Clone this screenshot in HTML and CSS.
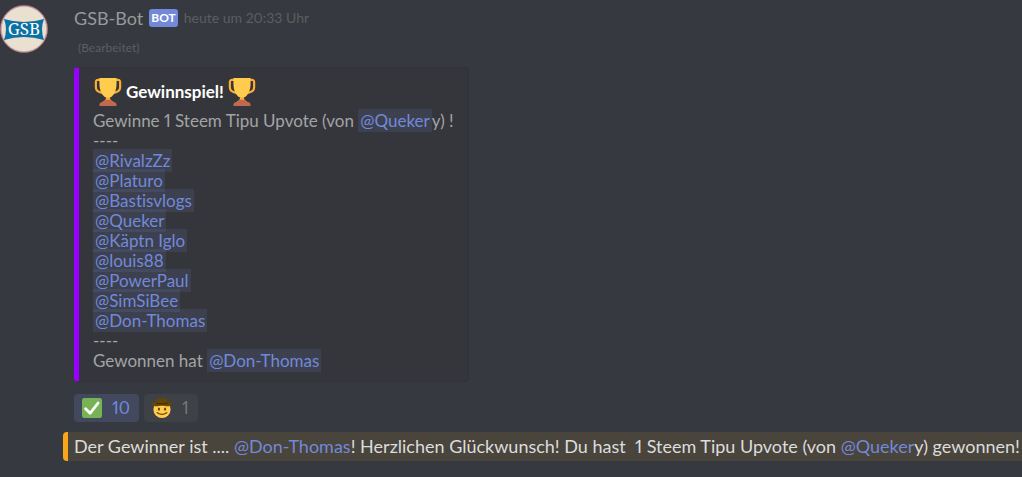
FILE: index.html
```html
<!DOCTYPE html>
<html lang="de">
<head>
<meta charset="utf-8">
<meta name="viewport" content="width=device-width, initial-scale=1">
<title>GSB-Bot</title>
<link rel="stylesheet" href="styles.css">
</head>
<body>
<svg class="symbols" aria-hidden="true">
  <symbol id="trophy" viewBox="0 0 36 36">
    <path fill="#ffac33" d="M5.1 1C2.8 1 1 2.8 1 5v7c0 4 2.4 7 7.2 8 4 .8 7 2.500 7.800 4h4c.8-1.500 3.800-3.200 7.800-4 4.800-1 7.200-4 7.200-8V5c0-2.200-1.800-4-4.100-4H26v3h5.400c.5 0 .8.4.8.9V12c0 2.900-1.800 4.600-5.200 5.200H9C5.600 16.600 3.800 14.900 3.800 12V4.900c0-.5.3-.9.8-.9H10V1z"/>
    <path fill="#ffac33" d="M15.500 20h5v5c0 3 2 4 4.500 6H11c2.500-2 4.500-3 4.500-6z"/>
    <path fill="#ffcc4d" d="M7 0h22v6c0 8-1.500 13-5.500 17-2 2-3 2-5.500 2s-3.500 0-5.500-2C8.500 19 7 14 7 6z"/>
    <path fill="#c1694f" d="M7 36v-1.500c0-2 1.500-3 3.500-3.500 2-.5 3.200-2 4-3h7c.8 1 2 2.500 4 3 2 .5 3.500 1.500 3.500 3.500V36z"/>
  </symbol>
</svg>
<main class="chat">
  <article class="message">
    <svg class="avatar" viewBox="0 0 48 48" role="img" aria-label="GSB-Bot">
      <circle cx="24" cy="24" r="23.500" fill="#ebdfcf" stroke="#c75a66"/>
      <circle cx="24" cy="24" r="22.700" fill="none" stroke="#86aebc" stroke-width=".7"/>
      <path fill="#0b70a3" d="M4 14q20 6 40 0-4 10 0 21-20-6-40 0 4-11 0-21z"/>
      <text class="avatar-text" x="24" y="30" text-anchor="middle">GSB</text>
    </svg>
    <div class="body">
      <header class="header">
        <span class="name">GSB-Bot</span>
        <span class="tag">BOT</span>
        <time class="time">heute um 20:33 Uhr</time>
      </header>
      <div class="edited">(Bearbeitet)</div>
      <section class="embed">
        <h2 class="title"><svg class="trophy" aria-hidden="true"><use href="#trophy"/></svg><span>Gewinnspiel!</span><svg class="trophy" aria-hidden="true"><use href="#trophy"/></svg></h2>
        <div class="description">
          Gewinne 1 Steem Tipu Upvote (von <a class="mention" href="#">@Queker</a>y) !<br>
          ----<br>
          <a class="mention" href="#">@RivalzZz</a><br>
          <a class="mention" href="#">@Platuro</a><br>
          <a class="mention" href="#">@Bastisvlogs</a><br>
          <a class="mention" href="#">@Queker</a><br>
          <a class="mention" href="#">@Käptn Iglo</a><br>
          <a class="mention" href="#">@louis88</a><br>
          <a class="mention" href="#">@PowerPaul</a><br>
          <a class="mention" href="#">@SimSiBee</a><br>
          <a class="mention" href="#">@Don-Thomas</a><br>
          ----<br>
          Gewonnen hat <a class="mention" href="#">@Don-Thomas</a>
        </div>
      </section>
      <div class="reactions">
        <button class="reaction reaction-mine" type="button">
          <svg class="emoji" viewBox="0 0 36 36" aria-hidden="true"><rect width="36" height="36" rx="4" fill="#77b255"/><path d="M6.500 19.500l8 8L29 9" fill="none" stroke="#fff" stroke-width="5" stroke-linecap="round" stroke-linejoin="round"/></svg>
          <span>10</span>
        </button>
        <button class="reaction" type="button">
          <svg class="emoji" viewBox="0 0 36 36" aria-hidden="true"><circle cx="18" cy="20.500" r="15.500" fill="#ffcc4d"/><ellipse cx="12.500" cy="20" rx="2" ry="2.800" fill="#664500"/><ellipse cx="23.500" cy="20" rx="2" ry="2.800" fill="#664500"/><path d="M9.500 26.500q8.500 6 17 0" fill="none" stroke="#664500" stroke-width="2.500" stroke-linecap="round"/><path fill="#664500" d="M-1 6c1 1 5 2 9 2 0-4 2-8 5-8 2 0 3 1 5 1s3-1 5-1c3 0 5 4 5 8 4 0 8-1 9-2 0 6-5 9-9 9-3 0-5-1-10-1s-7 1-10 1c-4 0-9-3-9-9z"/><path d="M8 8q10 4 20 0v2.500q-10 3-20 0z" fill="#3f2a00"/></svg>
          <span>1</span>
        </button>
      </div>
    </div>
  </article>
  <p class="highlight">Der Gewinner ist .... <a class="mention-plain" href="#">@Don-Thomas</a>! Herzlichen Glückwunsch! Du hast&nbsp; 1 Steem Tipu Upvote (von <a class="mention-plain" href="#">@Queker</a>y) gewonnen!</p>
</main>
</body>
</html>
```
FILE: styles.css
```css
* { box-sizing: border-box; }

body {
  margin: 0;
  min-height: 100vh;
  background: #36393f;
  color: #a3a4a6;
  font-family: Lato, "Open Sans", sans-serif;
  font-size: 17px;
  font-variant-ligatures: none;
  font-variant-numeric: proportional-nums;
  line-height: 20px;
}

a { text-decoration: none; }

.symbols { display: none; }

.chat { padding-top: 5px; }

.message {
  display: flex;
  gap: 26px;
}

.avatar {
  flex: none;
  width: 48px;
  height: 48px;
}

.avatar-text {
  fill: #fff;
  font: 17px "Noto Serif", "Liberation Serif", serif;
}

.body { min-width: 0; }

.header {
  display: flex;
  align-items: center;
  gap: 6px;
  height: 26px;
}

.name {
  color: #97999c;
  font-size: 18px;
}

.tag {
  padding: 0 2px;
  border-radius: 3px;
  background: #7289da;
  color: #fff;
  font-size: 12px;
  font-weight: 700;
  line-height: 18px;
}

.time {
  color: #5b5e63;
  font-size: 14px;
}

.edited {
  margin-bottom: 6px;
  padding: 4px 0 0 4px;
  color: #5b5e63;
  font-size: 12px;
  line-height: 26px;
}

.embed {
  width: fit-content;
  padding: 9px 14px 10px;
  border: 1px solid #323337;
  border-left: 5px solid #9900ff;
  border-radius: 4px;
  background: #35363b;
}

.title {
  display: flex;
  align-items: center;
  gap: 4px;
  margin: 0 0 5px;
  padding-left: 1px;
  color: #fff;
  font-size: 17px;
  font-weight: 700;
  line-height: 28px;
}

.title span { padding-top: 1px; }

.trophy {
  width: 28px;
  height: 28px;
}

.mention {
  padding: 1px 2px;
  background: rgba(114, 137, 218, 0.13);
  color: #7289da;
}

.reactions {
  display: flex;
  gap: 5px;
  margin-top: 12px;
}

.reaction {
  display: flex;
  align-items: center;
  gap: 10px;
  height: 28px;
  padding: 0 9px 0 8px;
  border: 0;
  border-radius: 4px;
  background: #3e4146;
  color: #75777b;
  font: inherit;
  font-variant-numeric: inherit;
}

.reaction-mine {
  background: #42485e;
  color: #7289da;
}

.emoji {
  width: 20px;
  height: 20px;
}

.highlight {
  margin: 10px 0 0 63px;
  padding: 2px 0 2px 6px;
  border-left: 5px solid #faa61a;
  border-radius: 4px 0 0 4px;
  background: #49443c;
  color: #dcddde;
  font-size: 18px;
  line-height: 25px;
}

.mention-plain { color: #7289da; }
```
